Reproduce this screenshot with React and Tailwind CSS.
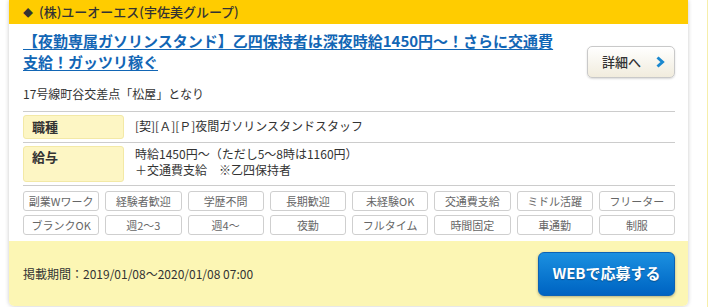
import React from 'react';

const font = { fontFamily: '"Noto Sans CJK JP", "Noto Sans", sans-serif' };

const tags = [
    '副業Wワーク', '経験者歓迎', '学歴不問', '長期歓迎', '未経験OK', '交通費支給', 'ミドル活躍', 'フリーター',
    'ブランクOK', '週2〜3', '週4〜', '夜勤', 'フルタイム', '時間固定', '車通勤', '制服',
];

export default function App() {
    return (
        <div className="flex h-[307px] w-[710px] overflow-hidden bg-white" style={font}>
            <div className="ml-[9px] flex h-[306px] w-[679px] shrink-0 flex-col overflow-hidden rounded-b-[5px] bg-white shadow-[0_0_4px_rgba(0,0,0,0.22)]">
                {/* company header */}
                <div className="flex h-[24px] items-center bg-[#ffcc00] pl-[14px] text-[13px] font-medium text-[#333]">
                    <span className="mr-[6px] text-[10px]">◆</span>
                    (株)ユーオーエス(宇佐美グループ)
                </div>

                <div className="px-[14px] pr-[13px]">
                    <div className="flex justify-between">
                        <div>
                            <a href="#" className="mt-[6px] block w-[545px] text-[15px] font-bold leading-[21px] text-[#1266b5] underline underline-offset-2">
                                【夜勤専属ガソリンスタンド】乙四保持者は深夜時給1450円〜！さらに交通費支給！ガッツリ稼ぐ
                            </a>
                            <p className="mt-[13px] text-[12px] leading-[18px] text-[#333]">17号線町谷交差点「松屋」となり</p>
                        </div>
                        <button className="mt-[22px] flex h-[32px] w-[88px] items-center justify-between rounded-[5px] border border-[#c9c9c9] bg-gradient-to-b from-white to-[#f1ecdd] pl-[14px] pr-[9px] text-[13px] font-medium text-[#333] shadow-[0_1px_2px_rgba(0,0,0,0.15)]">
                            詳細へ
                            <svg width="9" height="12" viewBox="0 0 9 12">
                                <path d="M1.5 1.5 L6.5 6 L1.5 10.5" fill="none" stroke="#1a88cf" strokeWidth="3" />
                            </svg>
                        </button>
                    </div>

                    {/* info table */}
                    <div className="mt-[8px] border-t border-[#cccccc]">
                        <div className="flex gap-[11px] py-[3px]">
                            <div className="h-[24px] w-[101px] shrink-0 rounded-[3px] border border-[#f3e9a6] bg-[#fdf6c4] pl-[8px] text-[13px] font-bold leading-[21px] text-[#333]">職種</div>
                            <div className="pt-[3px] text-[12px] leading-[16px] text-[#333]">[契][Ａ][Ｐ]夜間ガソリンスタンドスタッフ</div>
                        </div>
                        <div className="flex gap-[11px] border-t border-[#cccccc] py-[3px]">
                            <div className="h-[36px] w-[101px] shrink-0 rounded-[3px] border border-[#f3e9a6] bg-[#fdf6c4] pl-[8px] text-[13px] font-bold leading-[19px] text-[#333]">給与</div>
                            <div className="text-[12px] leading-[16px] text-[#333]">
                                <div>時給1450円〜（ただし5〜8時は1160円）</div>
                                <div>＋交通費支給　※乙四保持者</div>
                            </div>
                        </div>
                    </div>

                    {/* tags */}
                    <div className="border-t border-[#cccccc] pt-[5px]">
                        <div className="grid w-[652px] grid-cols-8 gap-x-[6px] gap-y-[4px]">
                            {tags.map((t) => (
                                <div key={t} className="flex h-[20px] items-center justify-center rounded-[3px] border border-[#cfcfcf] bg-white text-[11px] text-[#666]">
                                    {t}
                                </div>
                            ))}
                        </div>
                    </div>
                </div>

                {/* footer */}
                <div className="mt-[6px] flex flex-1 items-center justify-between bg-[#fcf6b4] pl-[14px] pr-[13px]">
                    <span className="text-[12px] text-[#333]">掲載期間：2019/01/08〜2020/01/08 07:00</span>
                    <button className="flex h-[44px] w-[137px] items-center justify-center rounded-[6px] border border-[#0b62b5] bg-gradient-to-b from-[#1b90e0] to-[#0063c2] text-[15px] font-bold text-white shadow-[0_1px_3px_rgba(0,0,0,0.3)] [text-shadow:0_1px_1px_rgba(0,0,0,0.3)]">
                        WEBで応募する
                    </button>
                </div>
            </div>
            <div className="ml-[19px] h-full w-[3px] shrink-0 border-l border-[#f6eeab]" />
        </div>
    );
}
